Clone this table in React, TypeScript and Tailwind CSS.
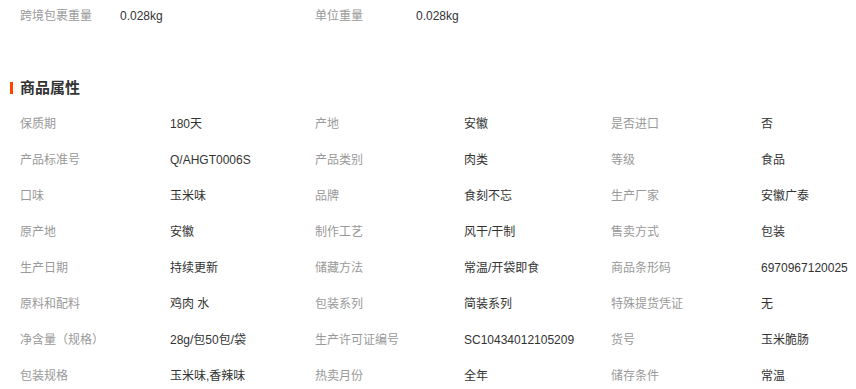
import React from "react";

const rows: string[][] = [
  ["保质期", "180天", "产地", "安徽", "是否进口", "否"],
  ["产品标准号", "Q/AHGT0006S", "产品类别", "肉类", "等级", "食品"],
  ["口味", "玉米味", "品牌", "食刻不忘", "生产厂家", "安徽广泰"],
  ["原产地", "安徽", "制作工艺", "风干/干制", "售卖方式", "包装"],
  ["生产日期", "持续更新", "储藏方法", "常温/开袋即食", "商品条形码", "6970967120025"],
  ["原料和配料", "鸡肉 水", "包装系列", "简装系列", "特殊提货凭证", "无"],
  ["净含量（规格）", "28g/包50包/袋", "生产许可证编号", "SC10434012105209", "货号", "玉米脆肠"],
  ["包装规格", "玉米味,香辣味", "热卖月份", "全年", "储存条件", "常温"],
];

export default function App() {
  return (
    <div
      className="w-[856px] h-[389px] overflow-hidden bg-white text-[12px] text-[#333]"
      style={{ fontFamily: '"Liberation Sans", "Noto Sans CJK SC", sans-serif' }}
    >
      <div className="flex h-[32px] items-center pl-[20px]">
        <div className="w-[100px] text-[#999]">跨境包裹重量</div>
        <div className="w-[195px]">0.028kg</div>
        <div className="w-[101px] text-[#999]">单位重量</div>
        <div>0.028kg</div>
      </div>
      <div className="mt-[44px] flex h-[24px] items-center pl-[10px]">
        <div className="h-[12px] w-[3px] bg-[#ff4400]" />
        <div className="ml-[7px] text-[15px] font-bold text-[#333]">商品属性</div>
      </div>
      <div className="mt-[6px] flex flex-col pl-[20px]">
        {rows.map((r, i) => (
          <div key={i} className="flex h-[36px] items-center whitespace-nowrap">
            <div className="w-[150px] text-[#999]">{r[0]}</div>
            <div className="w-[145px]">{r[1]}</div>
            <div className="w-[149px] text-[#999]">{r[2]}</div>
            <div className="w-[147px]">{r[3]}</div>
            <div className="w-[150px] text-[#999]">{r[4]}</div>
            <div>{r[5]}</div>
          </div>
        ))}
      </div>
    </div>
  );
}
